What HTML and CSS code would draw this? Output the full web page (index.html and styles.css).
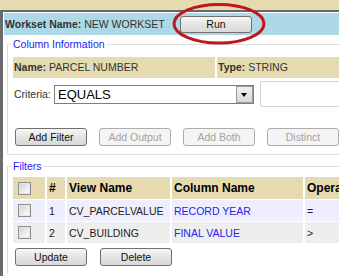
FILE: index.html
```html
<!DOCTYPE html>
<html lang="en">

	<head>
		<meta charset="UTF-8">
		<meta name="viewport" content="width=device-width, initial-scale=1.0">
		<title>Workset</title>
		<link rel="stylesheet" href="styles.css">
	</head>

	<body>

		<div class="panel">
			<!-- workset title bar -->
			<div class="workset-bar">
				<span class="workset-label"><b>Workset Name:</b> NEW WORKSET</span>
				<button class="btn">Run</button>
			</div>

			<!-- column information -->
			<fieldset class="group">
				<legend>Column Information</legend>
				<div class="col-info">
					<div class="info-cell name-cell"><b>Name:</b> PARCEL NUMBER</div>
					<div class="info-cell type-cell"><b>Type:</b> STRING</div>
				</div>
				<div class="criteria">
					<span class="criteria-label">Criteria:</span>
					<div class="dropdown">
						<span class="dropdown-text">EQUALS</span>
						<span class="dropdown-arrow"></span>
					</div>
					<div class="value-box"></div>
				</div>
				<div class="actions">
					<button class="btn">Add Filter</button>
					<button class="btn" disabled>Add Output</button>
					<button class="btn" disabled>Add Both</button>
					<button class="btn" disabled>Distinct</button>
				</div>
			</fieldset>

			<!-- filters -->
			<fieldset class="group filters">
				<legend>Filters</legend>
				<table class="filter-table">
					<tr class="head">
						<th class="cb-col"><span class="check"></span></th>
						<th class="num-col">#</th>
						<th class="view-col">View Name</th>
						<th class="colname-col">Column Name</th>
						<th class="op-col">Operator</th>
					</tr>
					<tr class="odd">
						<td><span class="check"></span></td>
						<td>1</td>
						<td>CV_PARCELVALUE</td>
						<td class="col-link">RECORD YEAR</td>
						<td>=</td>
					</tr>
					<tr class="even">
						<td><span class="check"></span></td>
						<td>2</td>
						<td>CV_BUILDING</td>
						<td class="col-link">FINAL VALUE</td>
						<td>&gt;</td>
					</tr>
				</table>
				<div class="actions bottom-actions">
					<button class="btn">Update</button>
					<button class="btn">Delete</button>
				</div>
			</fieldset>
		</div>

		<!-- red circle drawn round the Run button -->
		<svg class="highlight" width="100" height="48" viewBox="0 0 100 48">
			<ellipse cx="49" cy="23.8" rx="45" ry="19.3" fill="none" stroke="#c0161d" stroke-width="3" />
		</svg>

	</body>

</html>
```

FILE: styles.css
```css
body {
	font-family: "Liberation Sans", Arial, sans-serif;
	font-size: 10.5px;
	margin: 0;
	padding: 10px 0 0 0;
	background-color: #e6dbb0;
	overflow: hidden;
	position: relative;
}

.panel {
	width: 600px;
	height: 400px;
	background-color: #fff;
	border-top: 2px solid #676767;
	border-left: 3px solid #6b6b6b;
	padding: 1px;
}

.workset-bar {
	background-color: #add8e6;
	height: 22px;
	display: flex;
	align-items: center;
	padding-left: 1px;
	color: #333;
}

.workset-label {
	width: 175px;
}

.btn {
	font-family: "Liberation Sans", Arial, sans-serif;
	font-size: 10.5px;
	width: 72px;
	height: 18px;
	padding: 0;
	color: #111;
	border: 1px solid #707070;
	border-radius: 3px;
	background: linear-gradient(#f6f6f6, #e4e4e4 50%, #d9d9d9);
}

.workset-bar .btn {
	height: 17px;
}

.btn:disabled {
	color: #a3a3a3;
	border-color: #adadad;
	background: #f4f4f4;
}

.group {
	margin: 3px 0 0 3px;
	padding: 7px 0 8px 5px;
	border: 1px solid #dedede;
	border-right: none;
}

.group legend {
	color: #1c1cf5;
	line-height: 12px;
	padding: 0 2px;
	margin-left: -2px;
}

.filters {
	margin-top: 5px;
	padding-top: 4px;
	border-bottom: none;
}

.col-info {
	display: flex;
	gap: 2px;
	height: 21px;
	color: #333;
}

.info-cell {
	background-color: #e6dbb0;
	line-height: 21px;
	padding-left: 1px;
	white-space: nowrap;
}

.name-cell {
	width: 201px;
}

.type-cell {
	width: 300px;
}

.criteria {
	display: flex;
	align-items: center;
	height: 26px;
	margin-top: 3px;
	color: #333;
}

.criteria-label {
	width: 40px;
	padding-left: 1px;
}

.dropdown {
	width: 198px;
	height: 17px;
	border: 1px solid #7f7f7f;
	display: flex;
	align-items: center;
	justify-content: space-between;
}

.dropdown-text {
	font-size: 13px;
	color: #000;
	padding-left: 3px;
}

.dropdown-arrow {
	width: 15px;
	height: 15px;
	border: 1px solid #9a9a9a;
	background: linear-gradient(#f0f0f0, #d8d8d8);
	position: relative;
}

.dropdown-arrow::after {
	content: "";
	position: absolute;
	left: 4px;
	top: 6px;
	border-left: 3.5px solid transparent;
	border-right: 3.5px solid transparent;
	border-top: 4px solid #000;
}

.value-box {
	width: 150px;
	height: 24px;
	margin-left: 6px;
	border: 1px solid #d4d4d4;
	border-radius: 2px;
}

.actions {
	display: flex;
	gap: 12px;
	margin: 21px 0 0 2px;
}

.bottom-actions {
	margin-top: 4px;
	gap: 13px;
}

.filter-table {
	border-collapse: separate;
	border-spacing: 2px 1px;
	margin-left: -2px;
	font-size: 10.5px;
}

.filter-table th,
.filter-table td {
	padding: 0 2px;
	text-align: left;
	white-space: nowrap;
	overflow: hidden;
}

.filter-table th {
	height: 22px;
	font-size: 12px;
	color: #000;
	background-color: #e6dbb0;
}

.filter-table td {
	height: 21px;
	color: #222;
}

.filter-table .cb-col {
	width: 28px;
}

.filter-table .num-col {
	width: 14px;
}

.filter-table .view-col {
	width: 99px;
}

.filter-table .colname-col {
	width: 127px;
}

.filter-table .op-col {
	width: 90px;
}

.odd td {
	background-color: #eeeeff;
}

.even td {
	background-color: #eeeeee;
}

.filter-table td.col-link {
	color: #2424f0;
}

.check {
	display: block;
	width: 11px;
	height: 11px;
	margin-left: 3px;
	border: 1px solid #8e8e8e;
	background: linear-gradient(135deg, #cfcfcf, #f4f4f4 70%, #fff);
	box-shadow: inset 0 0 0 1px #e6e6e6;
}

.highlight {
	position: absolute;
	left: 170px;
	top: 0;
}
```
